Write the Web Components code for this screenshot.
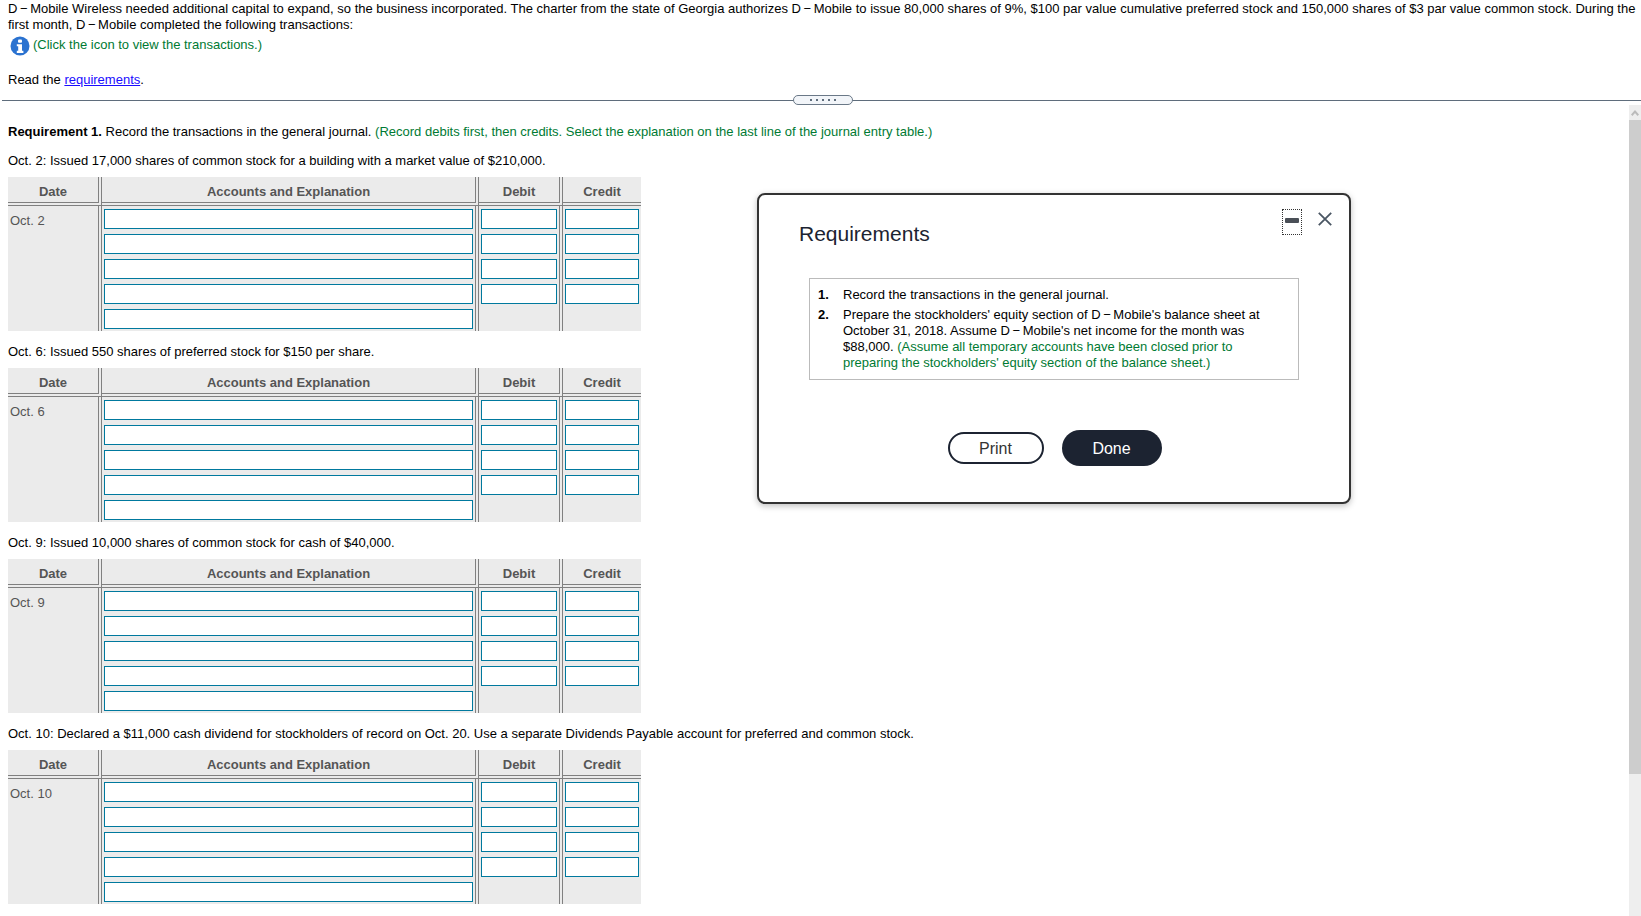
<!DOCTYPE html>
<html lang="en">

<head>
  <meta charset="UTF-8">
  <title>Requirement 1</title>
  <style>
    html, body { margin: 0; height: 100%; overflow: hidden; background: #fff; }
    body { font: 13px/16px "Liberation Sans", Arial, sans-serif; color: #000; }
  </style>
</head>

<body>
  <template id="problem-tpl">
    <style>
      :host { display: block; height: 100px; box-sizing: border-box; padding: 1px 0 0 8px; overflow: hidden; }
      p { margin: 0; }
      .note { display: flex; align-items: center; height: 24px; margin: 0 0 0 2px; color: #007a33; }
      .note svg { margin: 2px 3px 0 0; }
      .read { margin-top: 15px; }
      a { color: #1a0dff; }
    </style>
    <p><slot name="intro"></slot></p>
    <div class="note">
      <svg width="20" height="20" viewBox="0 0 20 20">
        <circle cx="10" cy="10" r="9.5" fill="#2a72d0"/>
        <rect x="8" y="3.5" width="4" height="3.2" rx="1" fill="#fff"/>
        <path d="M6.8 8.2h5.2v6.6h1.4v2.1H6.8v-2.1h1.4v-4.5H6.8z" fill="#fff"/>
      </svg>
      <span>(Click the icon to view the transactions.)</span>
    </div>
    <p class="read">Read the <a href="#">requirements</a>.</p>
  </template>

  <template id="handle-tpl">
    <style>
      :host { display: block; height: 10px; margin: -5px 0 0 2px; position: relative; }
      .line { height: 1px; background: #5f6d7c; position: absolute; left: 0; right: 0; top: 5px; }
      .grip { position: absolute; left: 791px; top: 0; width: 58px; height: 8px; border: 1px solid #6a7887; border-radius: 5px; background: #f2f5f9; display: flex; gap: 4px; align-items: center; justify-content: center; }
      i { width: 2px; height: 2px; background: #5f6d7c; }
    </style>
    <div class="line"></div>
    <div class="grip"><i></i><i></i><i></i><i></i><i></i></div>
  </template>

  <template id="journal-tpl">
    <style>
      :host { display: block; }
      .cap { height: 37px; line-height: 16px; padding-top: 13px; box-sizing: border-box; }
      .tbl { width: 633px; height: 154px; background: #ebebeb; display: grid; grid-template-columns: 94px 377px 84px 78px; grid-template-rows: 29px 1fr; color: #555; }
      .h { box-sizing: border-box; font-weight: bold; text-align: center; padding-top: 4px; line-height: 21px; border-bottom: 4px double #808080; border-right: 4px double #808080; }
      .h:nth-child(4) { border-right: 0; }
      .c { box-sizing: border-box; border-right: 4px double #808080; padding: 3px 2px 0; display: flex; flex-direction: column; gap: 5px; }
      .c:last-child { border-right: 0; }
      .d { padding: 7px 2px 0; line-height: 16px; }
      input { display: block; box-sizing: border-box; width: 100%; height: 20px; margin: 0; padding: 0; border: 1px solid #00799e; border-radius: 0; background: #fff; }
    </style>
    <div class="cap"><slot></slot></div>
    <div class="tbl">
      <div class="h">Date</div><div class="h">Accounts and Explanation</div><div class="h">Debit</div><div class="h">Credit</div>
      <div class="c d" id="date"></div>
      <div class="c" id="acct"></div>
      <div class="c" id="deb"></div>
      <div class="c" id="cred"></div>
    </div>
  </template>

  <template id="scroll-tpl">
    <style>
      :host { display: flex; flex-direction: column; flex: none; width: 12px; background: #eee; }
      .up { height: 15px; display: flex; align-items: center; justify-content: center; }
      .thumb { height: 654px; background: #cdcdcd; }
    </style>
    <div class="up"><svg width="8" height="6" viewBox="0 0 8 6"><path d="M0.7 5.2 4 1.6l3.3 3.6" fill="none" stroke="#bbb" stroke-width="2"/></svg></div>
    <div class="thumb"></div>
  </template>

  <template id="dialog-tpl">
    <style>
      :host { position: absolute; left: 757px; top: 193px; width: 594px; height: 311px; box-sizing: border-box; background: #fff; border: 2px solid #333; border-radius: 8px; box-shadow: 0 2px 6px rgba(0,0,0,.25); display: block; }
      .inner { display: flex; flex-direction: column; height: 100%; padding: 0 48px 0 40px; box-sizing: border-box; }
      .top { height: 83px; }
      h2 { margin: 26px 0 0; font: normal 21px/26px "Liberation Sans", Arial, sans-serif; color: #1c2331; }
      .tools { display: flex; align-items: flex-start; position: absolute; right: 17px; top: 14px; gap: 16px; }
      .min { width: 20px; height: 26px; box-sizing: border-box; border: 1px dotted #333; padding: 8px 2px 0; }
      .min i { display: block; width: 14px; height: 5px; background: #4a4f57; border-radius: 1px; }
      .x { margin-top: 3px; }
      .box { margin-left: 10px; width: 490px; height: 102px; box-sizing: border-box; border: 1px solid #bbb; padding: 8px 8px 0; }
      .btns { display: flex; justify-content: center; align-items: center; gap: 18px; margin-top: 50px; padding-left: 9px; }
      button { font: 16px "Liberation Sans", Arial, sans-serif; box-sizing: border-box; border-radius: 18px; padding: 1px 0 0; }
      .print { width: 96px; height: 32px; background: #fff; border: 2px solid #1c2331; color: #333; }
      .done { width: 100px; height: 36px; background: #1c2331; border: 0; color: #fff; }
    </style>
    <div class="inner">
      <div class="top">
        <h2>Requirements</h2>
        <div class="tools">
          <div class="min"><i></i></div>
          <svg class="x" width="14" height="14" viewBox="0 0 14 14"><path d="M0.8 0.8 13.2 13.2M13.2 0.8 0.8 13.2" stroke="#4a5663" stroke-width="1.8" fill="none"/></svg>
        </div>
      </div>
      <div class="box"><slot></slot></div>
      <div class="btns"><button class="print">Print</button><button class="done">Done</button></div>
    </div>
  </template>

  <template id="reqlist-tpl">
    <style>
      :host { display: block; }
      .r { display: flex; margin-bottom: 4px; }
      b { width: 25px; flex: none; }
      .l { display: block; }
      .g { color: #007a33; }
    </style>
    <div class="r"><b>1.</b><div>Record the transactions in the general journal.</div></div>
    <div class="r"><b>2.</b><div>
      <span class="l">Prepare the stockholders' equity section of D&#8201;&#8722;&#8201;Mobile's balance sheet at</span>
      <span class="l">October 31, 2018. Assume D&#8201;&#8722;&#8201;Mobile's net income for the month was</span>
      <span class="l"><span>$88,000.</span> <span class="g">(Assume all temporary accounts have been closed prior to</span></span>
      <span class="l g">preparing the stockholders' equity section of the balance sheet.)</span>
    </div></div>
  </template>

  <template id="pane-tpl">
    <style>
      :host { display: flex; height: 811px; overflow: hidden; }
      .body { flex: 1; min-width: 0; padding: 19px 0 0 8px; }
    </style>
    <div class="body">
      <slot></slot>
    </div>
    <scroll-bar></scroll-bar>
  </template>

  <problem-text>
    <span slot="intro">D&#8201;&#8722;&#8201;Mobile Wireless needed additional capital to expand, so the business incorporated. The charter from the state of Georgia authorizes D&#8201;&#8722;&#8201;Mobile to issue 80,000 shares of 9%, $100 par value cumulative preferred stock and 150,000 shares of $3 par value common stock. During the first month, D&#8201;&#8722;&#8201;Mobile completed the following transactions:</span>
  </problem-text>
  <split-handle></split-handle>
  <work-pane>
    <div><b>Requirement 1.</b> Record the transactions in the general journal. <span style="color:#007a33">(Record debits first, then credits. Select the explanation on the last line of the journal entry table.)</span></div>
    <journal-table date="Oct. 2">Oct. 2: Issued 17,000 shares of common stock for a building with a market value of $210,000.</journal-table>
    <journal-table date="Oct. 6">Oct. 6: Issued 550 shares of preferred stock for $150 per share.</journal-table>
    <journal-table date="Oct. 9">Oct. 9: Issued 10,000 shares of common stock for cash of $40,000.</journal-table>
    <journal-table date="Oct. 10">Oct. 10: Declared a $11,000 cash dividend for stockholders of record on Oct. 20. Use a separate Dividends Payable account for preferred and common stock.</journal-table>
  </work-pane>
  <req-dialog><req-list></req-list></req-dialog>

  <script>
    function fromTemplate(el, id) {
      const shadow = el.attachShadow({ mode: 'open' })
      shadow.appendChild(document.querySelector(id).content.cloneNode(true))
      return shadow
    }

    class ProblemText extends HTMLElement {
      constructor() { super(); fromTemplate(this, '#problem-tpl') }
    }
    class SplitHandle extends HTMLElement {
      constructor() { super(); fromTemplate(this, '#handle-tpl') }
    }
    class ScrollBar extends HTMLElement {
      constructor() { super(); fromTemplate(this, '#scroll-tpl') }
    }
    class WorkPane extends HTMLElement {
      constructor() { super(); fromTemplate(this, '#pane-tpl') }
    }
    class ReqDialog extends HTMLElement {
      constructor() { super(); fromTemplate(this, '#dialog-tpl') }
    }
    class ReqList extends HTMLElement {
      constructor() { super(); fromTemplate(this, '#reqlist-tpl') }
    }
    class JournalTable extends HTMLElement {
      constructor() {
        super()
        const shadow = fromTemplate(this, '#journal-tpl')
        shadow.querySelector('#date').textContent = this.getAttribute('date')
        const fill = (id, n) => {
          const col = shadow.querySelector(id)
          for (let i = 0; i < n; i++) col.appendChild(document.createElement('input'))
        }
        fill('#acct', 5)
        fill('#deb', 4)
        fill('#cred', 4)
      }
    }

    customElements.define('problem-text', ProblemText)
    customElements.define('split-handle', SplitHandle)
    customElements.define('scroll-bar', ScrollBar)
    customElements.define('work-pane', WorkPane)
    customElements.define('req-dialog', ReqDialog)
    customElements.define('req-list', ReqList)
    customElements.define('journal-table', JournalTable)
  </script>
</body>

</html>
